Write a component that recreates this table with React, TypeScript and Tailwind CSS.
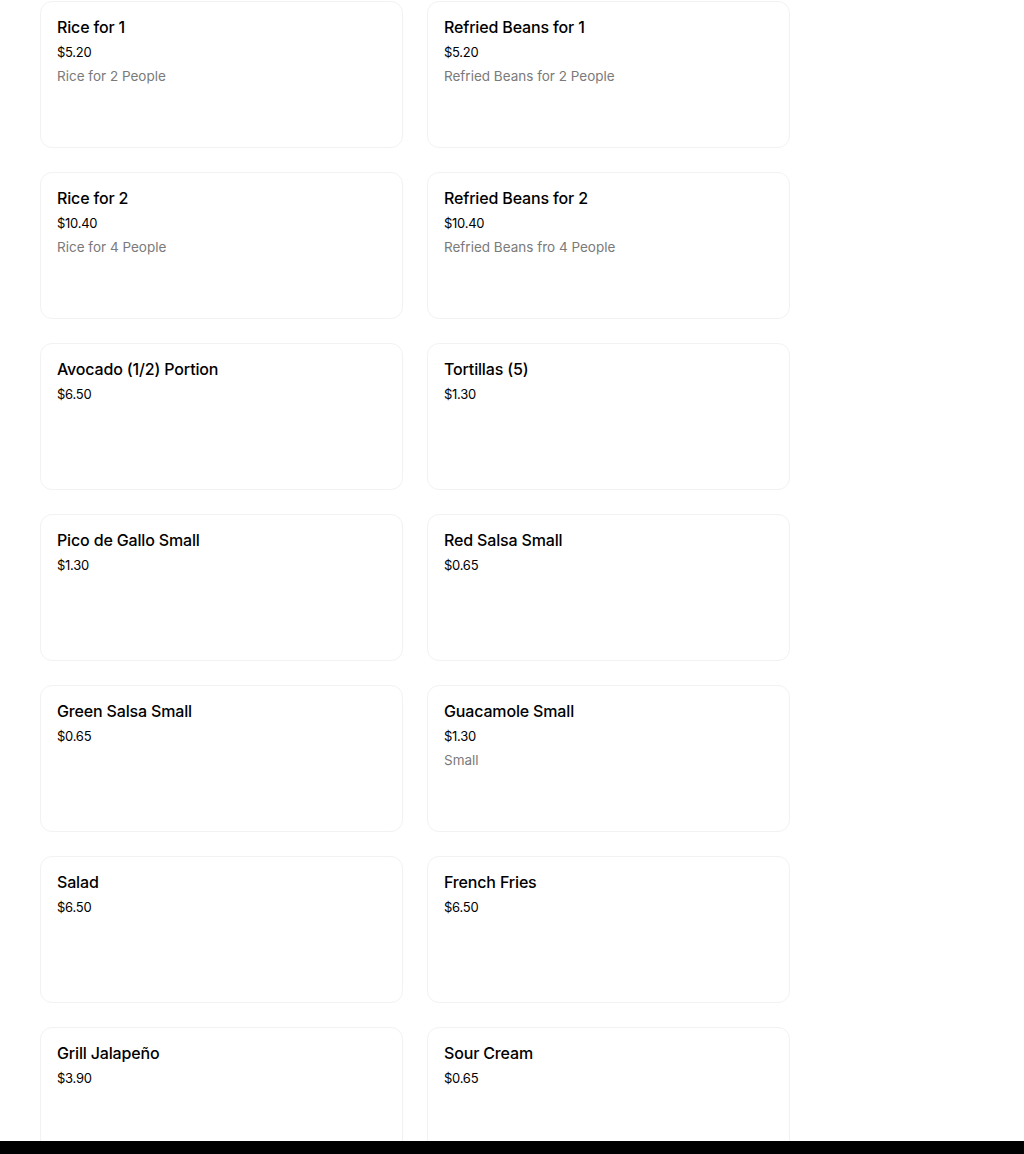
interface MenuItem {
  title: string;
  price: string;
  description?: string;
}

const items: MenuItem[] = [
  { title: "Rice for 1", price: "$5.20", description: "Rice for 2 People" },
  { title: "Refried Beans for 1", price: "$5.20", description: "Refried Beans for 2 People" },
  { title: "Rice for 2", price: "$10.40", description: "Rice for 4 People" },
  { title: "Refried Beans for 2", price: "$10.40", description: "Refried Beans fro 4 People" },
  { title: "Avocado (1/2) Portion", price: "$6.50" },
  { title: "Tortillas (5)", price: "$1.30" },
  { title: "Pico de Gallo Small", price: "$1.30" },
  { title: "Red Salsa Small", price: "$0.65" },
  { title: "Green Salsa Small", price: "$0.65" },
  { title: "Guacamole Small", price: "$1.30", description: "Small" },
  { title: "Salad", price: "$6.50" },
  { title: "French Fries", price: "$6.50" },
  { title: "Grill Jalapeño", price: "$3.90" },
  { title: "Sour Cream", price: "$0.65" },
];

function MenuCard({ item }: { item: MenuItem }) {
  return (
    <div className="h-[147px] rounded-xl border border-[#f2f2f2] bg-white px-4 pt-[15px]">
      <h4 className="text-base leading-5 font-medium tracking-[-0.01em] text-black">{item.title}</h4>
      <p className="mt-[5px] text-[13px] leading-5 tracking-[-0.02em] text-black">{item.price}</p>
      {item.description && (
        <p className="mt-1 text-[13.5px] leading-5 text-[#7a7a7a]">{item.description}</p>
      )}
    </div>
  );
}

export default function App() {
  return (
    <div
      className="relative h-[1154px] overflow-hidden bg-white"
      style={{ fontFamily: "Inter, 'Noto Sans', sans-serif" }}
    >
      <div className="ml-10 mt-px grid w-[750px] grid-cols-2 gap-x-6 gap-y-6">
        {items.map((item) => (
          <MenuCard key={item.title} item={item} />
        ))}
      </div>
      <div className="absolute bottom-0 left-0 right-0 h-[13px] bg-black"></div>
    </div>
  );
}
